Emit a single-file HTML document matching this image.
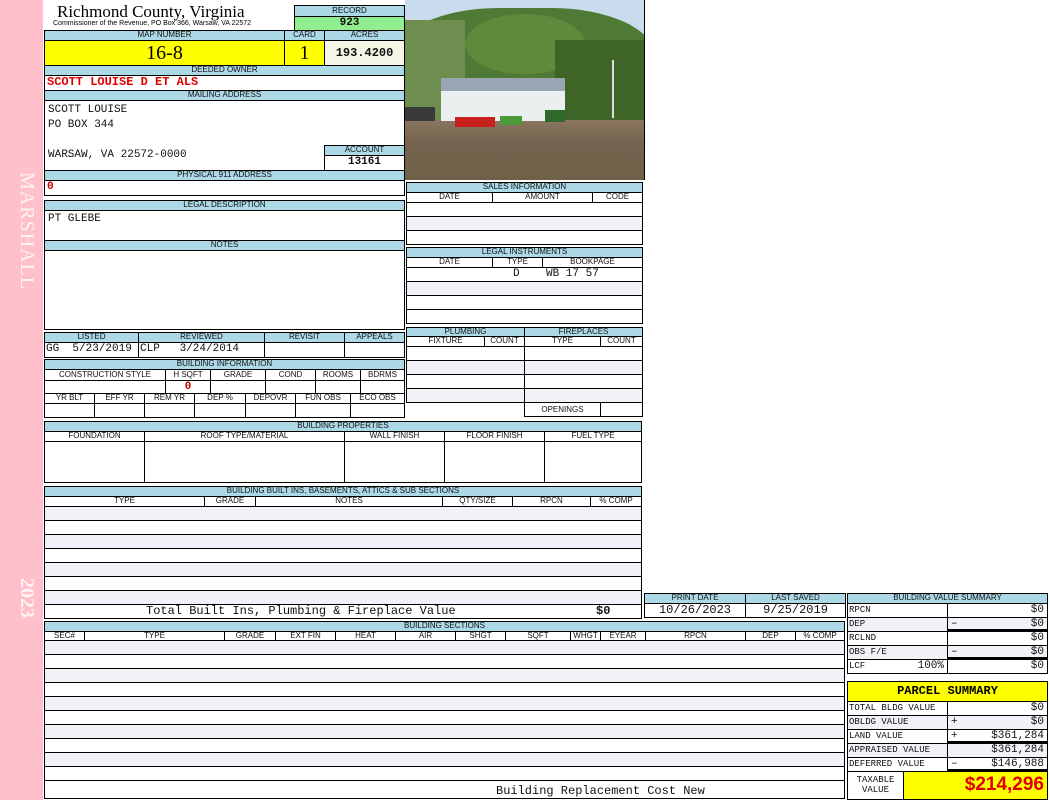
<!DOCTYPE html>
<html><head><meta charset="utf-8"><style>
body{margin:0;width:1050px;height:800px;background:#fff;position:relative;overflow:hidden;font-family:"Liberation Sans",sans-serif}
.c{position:absolute;box-sizing:border-box;border:1px solid #000;overflow:hidden;white-space:nowrap}
.h{background:#add8e6;font-size:8px;text-align:center;line-height:8px;color:#111}
.s{font-size:8px;text-align:center;line-height:8px;color:#111}
.m{font-family:"Liberation Mono",monospace;font-size:11px;line-height:13px;color:#111}
.a{background:#f1f2f8}
.r{text-align:right;padding-right:3px}
</style></head><body>
<div style="position:absolute;left:0;top:0;width:43px;height:800px;background:#ffc0cb"></div>
<div style="position:absolute;left:8px;top:172px;width:30px;height:150px;writing-mode:vertical-rl;font:20px 'Liberation Serif',serif;color:#fff3f5;letter-spacing:1px">MARSHALL</div>
<div style="position:absolute;left:8px;top:578px;width:30px;height:60px;writing-mode:vertical-rl;font:bold 20px 'Liberation Serif',serif;color:#fff3f5">2023</div>

<div style="position:absolute;left:57px;top:2px;font:17px 'Liberation Serif',serif;color:#000">Richmond County, Virginia</div>
<div style="position:absolute;left:53px;top:20px;font:7px 'Liberation Sans',sans-serif;color:#000">Commissioner of the Revenue, PO Box 366, Warsaw, VA 22572</div>
<div class="c h" style="left:294px;top:5px;width:111px;height:12px;line-height:10px">RECORD</div>
<div class="c m" style="left:294px;top:16px;width:111px;height:15px;background:#90ee90;text-align:center;font-weight:bold">923</div>

<div class="c h" style="left:44px;top:30px;width:241px;height:11px">MAP NUMBER</div>
<div class="c h" style="left:284px;top:30px;width:41px;height:11px">CARD</div>
<div class="c h" style="left:324px;top:30px;width:81px;height:11px">ACRES</div>
<div class="c" style="left:44px;top:40px;width:241px;height:26px;background:#ffff00;text-align:center;font:20px 'Liberation Serif',serif;line-height:24px">16-8</div>
<div class="c" style="left:284px;top:40px;width:41px;height:26px;background:#ffff00;text-align:center;font:20px 'Liberation Serif',serif;line-height:24px">1</div>
<div class="c m" style="left:324px;top:40px;width:81px;height:26px;background:#f5f5e6;text-align:center;font-weight:bold;line-height:24px;font-size:12px">193.4200</div>

<div class="c h" style="left:44px;top:65px;width:361px;height:11px">DEEDED OWNER</div>
<div class="c m" style="left:44px;top:75px;width:361px;height:16px;color:#e00000;font-weight:bold;padding-left:2px;font-size:12px">SCOTT LOUISE D ET ALS</div>
<div class="c h" style="left:44px;top:90px;width:361px;height:11px">MAILING ADDRESS</div>
<div class="c m" style="left:44px;top:100px;width:361px;height:71px;padding:2px 3px;line-height:15px;white-space:pre">SCOTT LOUISE
PO BOX 344

WARSAW, VA 22572-0000</div>
<div class="c h" style="left:324px;top:145px;width:81px;height:11px">ACCOUNT</div>
<div class="c m" style="left:324px;top:155px;width:81px;height:16px;text-align:center;font-weight:bold">13161</div>
<div class="c h" style="left:44px;top:170px;width:361px;height:11px">PHYSICAL 911 ADDRESS</div>
<div class="c m" style="left:44px;top:180px;width:361px;height:16px;color:#c00000;font-weight:bold;padding-left:2px">0</div>

<div class="c h" style="left:44px;top:200px;width:361px;height:11px">LEGAL DESCRIPTION</div>
<div class="c m" style="left:44px;top:210px;width:361px;height:31px;padding:2px 3px">PT GLEBE</div>
<div class="c h" style="left:44px;top:240px;width:361px;height:11px">NOTES</div>
<div class="c" style="left:44px;top:250px;width:361px;height:80px"></div>

<div class="c h" style="left:44px;top:332px;width:95px;height:11px">LISTED</div>
<div class="c h" style="left:138px;top:332px;width:127px;height:11px">REVIEWED</div>
<div class="c h" style="left:264px;top:332px;width:81px;height:11px">REVISIT</div>
<div class="c h" style="left:344px;top:332px;width:61px;height:11px">APPEALS</div>
<div class="c m" style="left:44px;top:342px;width:95px;height:16px;padding-left:1px;white-space:pre">GG  5/23/2019</div>
<div class="c m" style="left:138px;top:342px;width:127px;height:16px;padding-left:1px;white-space:pre">CLP   3/24/2014</div>
<div class="c" style="left:264px;top:342px;width:81px;height:16px"></div>
<div class="c" style="left:344px;top:342px;width:61px;height:16px"></div>

<div class="c h" style="left:44px;top:359px;width:361px;height:11px">BUILDING INFORMATION</div>
<div class="c s" style="left:44px;top:369px;width:122px;height:12px;line-height:10px">CONSTRUCTION STYLE</div>
<div class="c s" style="left:165px;top:369px;width:46px;height:12px;line-height:10px">H SQFT</div>
<div class="c s" style="left:210px;top:369px;width:56px;height:12px;line-height:10px">GRADE</div>
<div class="c s" style="left:265px;top:369px;width:51px;height:12px;line-height:10px">COND</div>
<div class="c s" style="left:315px;top:369px;width:46px;height:12px;line-height:10px">ROOMS</div>
<div class="c s" style="left:360px;top:369px;width:45px;height:12px;line-height:10px">BDRMS</div>
<div class="c" style="left:44px;top:380px;width:122px;height:14px"></div>
<div class="c m" style="left:165px;top:380px;width:46px;height:14px;text-align:center;color:#c00000;font-weight:bold;line-height:12px">0</div>
<div class="c" style="left:210px;top:380px;width:56px;height:14px"></div>
<div class="c" style="left:265px;top:380px;width:51px;height:14px"></div>
<div class="c" style="left:315px;top:380px;width:46px;height:14px"></div>
<div class="c" style="left:360px;top:380px;width:45px;height:14px"></div>
<div class="c s" style="left:44px;top:393px;width:51px;height:11px">YR BLT</div>
<div class="c s" style="left:94px;top:393px;width:51px;height:11px">EFF YR</div>
<div class="c s" style="left:144px;top:393px;width:51px;height:11px">REM YR</div>
<div class="c s" style="left:194px;top:393px;width:52px;height:11px">DEP %</div>
<div class="c s" style="left:245px;top:393px;width:51px;height:11px">DEPOVR</div>
<div class="c s" style="left:295px;top:393px;width:56px;height:11px">FUN OBS</div>
<div class="c s" style="left:350px;top:393px;width:55px;height:11px">ECO OBS</div>
<div class="c" style="left:44px;top:403px;width:51px;height:15px"></div>
<div class="c" style="left:94px;top:403px;width:51px;height:15px"></div>
<div class="c" style="left:144px;top:403px;width:51px;height:15px"></div>
<div class="c" style="left:194px;top:403px;width:52px;height:15px"></div>
<div class="c" style="left:245px;top:403px;width:51px;height:15px"></div>
<div class="c" style="left:295px;top:403px;width:56px;height:15px"></div>
<div class="c" style="left:350px;top:403px;width:55px;height:15px"></div>

<!-- photo -->
<div style="position:absolute;left:405px;top:0;width:240px;height:180px;overflow:hidden;background:#c9dcee;border-right:1px solid #000;box-sizing:border-box">
 <div style="position:absolute;left:-10px;top:8px;width:260px;height:120px;background:#4f7a35;border-radius:40% 40% 0 0"></div>
 <div style="position:absolute;left:0;top:20px;width:60px;height:100px;background:#6e8e50"></div>
 <div style="position:absolute;left:60px;top:14px;width:120px;height:60px;background:#5f8a3c;border-radius:50%"></div>
 <div style="position:absolute;left:150px;top:40px;width:90px;height:80px;background:#3f6428"></div>
 <div style="position:absolute;left:0;top:120px;width:240px;height:60px;background:linear-gradient(#8a7660,#75634f 40%,#6f6048)"></div>
 <div style="position:absolute;left:36px;top:78px;width:124px;height:13px;background:#9aa6b4"></div>
 <div style="position:absolute;left:36px;top:91px;width:124px;height:30px;background:#eceff0"></div>
 <div style="position:absolute;left:0;top:107px;width:30px;height:14px;background:#3a3a3a"></div>
 <div style="position:absolute;left:50px;top:117px;width:40px;height:10px;background:#c8201c"></div>
 <div style="position:absolute;left:95px;top:116px;width:22px;height:9px;background:#4a9a3a"></div>
 <div style="position:absolute;left:140px;top:110px;width:20px;height:12px;background:#2f6a2a"></div>
 <div style="position:absolute;left:207px;top:60px;width:2px;height:58px;background:#ddd"></div>
</div>

<div class="c h" style="left:406px;top:182px;width:237px;height:11px">SALES INFORMATION</div>
<div class="c s" style="left:406px;top:192px;width:87px;height:11px">DATE</div>
<div class="c s" style="left:492px;top:192px;width:101px;height:11px">AMOUNT</div>
<div class="c s" style="left:592px;top:192px;width:51px;height:11px">CODE</div>
<div class="c" style="left:406px;top:202px;width:237px;height:15px"></div>
<div class="c a" style="left:406px;top:216px;width:237px;height:15px"></div>
<div class="c" style="left:406px;top:230px;width:237px;height:15px"></div>

<div class="c h" style="left:406px;top:247px;width:237px;height:11px">LEGAL INSTRUMENTS</div>
<div class="c s" style="left:406px;top:257px;width:87px;height:11px">DATE</div>
<div class="c s" style="left:492px;top:257px;width:51px;height:11px">TYPE</div>
<div class="c s" style="left:542px;top:257px;width:101px;height:11px">BOOKPAGE</div>
<div class="c m" style="left:406px;top:267px;width:237px;height:15px;padding-left:106px;white-space:pre">D    WB 17 57</div>
<div class="c a" style="left:406px;top:281px;width:237px;height:15px"></div>
<div class="c" style="left:406px;top:295px;width:237px;height:15px"></div>
<div class="c" style="left:406px;top:309px;width:237px;height:15px"></div>

<div class="c h" style="left:406px;top:327px;width:119px;height:10px">PLUMBING</div>
<div class="c h" style="left:524px;top:327px;width:119px;height:10px">FIREPLACES</div>
<div class="c s" style="left:406px;top:336px;width:79px;height:11px">FIXTURE</div>
<div class="c s" style="left:484px;top:336px;width:41px;height:11px">COUNT</div>
<div class="c s" style="left:524px;top:336px;width:77px;height:11px">TYPE</div>
<div class="c s" style="left:600px;top:336px;width:43px;height:11px">COUNT</div>
<div class="c" style="left:406px;top:346px;width:119px;height:15px"></div>
<div class="c a" style="left:406px;top:360px;width:119px;height:15px"></div>
<div class="c" style="left:406px;top:374px;width:119px;height:15px"></div>
<div class="c a" style="left:406px;top:388px;width:119px;height:15px"></div>
<div class="c" style="left:524px;top:346px;width:119px;height:15px"></div>
<div class="c a" style="left:524px;top:360px;width:119px;height:15px"></div>
<div class="c" style="left:524px;top:374px;width:119px;height:15px"></div>
<div class="c a" style="left:524px;top:388px;width:119px;height:15px"></div>
<div class="c s" style="left:524px;top:402px;width:77px;height:15px;line-height:13px">OPENINGS</div>
<div class="c" style="left:600px;top:402px;width:43px;height:15px"></div>

<div class="c h" style="left:44px;top:421px;width:598px;height:11px">BUILDING PROPERTIES</div>
<div class="c s" style="left:44px;top:431px;width:101px;height:11px">FOUNDATION</div>
<div class="c s" style="left:144px;top:431px;width:201px;height:11px">ROOF TYPE/MATERIAL</div>
<div class="c s" style="left:344px;top:431px;width:101px;height:11px">WALL FINISH</div>
<div class="c s" style="left:444px;top:431px;width:101px;height:11px">FLOOR FINISH</div>
<div class="c s" style="left:544px;top:431px;width:98px;height:11px">FUEL TYPE</div>
<div class="c" style="left:44px;top:441px;width:101px;height:42px"></div>
<div class="c" style="left:144px;top:441px;width:201px;height:42px"></div>
<div class="c" style="left:344px;top:441px;width:101px;height:42px"></div>
<div class="c" style="left:444px;top:441px;width:101px;height:42px"></div>
<div class="c" style="left:544px;top:441px;width:98px;height:42px"></div>

<div class="c h" style="left:44px;top:486px;width:598px;height:11px">BUILDING BUILT INS, BASEMENTS, ATTICS &amp; SUB SECTIONS</div>
<div class="c s" style="left:44px;top:496px;width:161px;height:11px">TYPE</div>
<div class="c s" style="left:204px;top:496px;width:52px;height:11px">GRADE</div>
<div class="c s" style="left:255px;top:496px;width:188px;height:11px">NOTES</div>
<div class="c s" style="left:442px;top:496px;width:71px;height:11px">QTY/SIZE</div>
<div class="c s" style="left:512px;top:496px;width:79px;height:11px">RPCN</div>
<div class="c s" style="left:590px;top:496px;width:52px;height:11px">% COMP</div>
<div class="c a" style="left:44px;top:506px;width:598px;height:15px"></div>
<div class="c" style="left:44px;top:520px;width:598px;height:15px"></div>
<div class="c a" style="left:44px;top:534px;width:598px;height:15px"></div>
<div class="c" style="left:44px;top:548px;width:598px;height:15px"></div>
<div class="c a" style="left:44px;top:562px;width:598px;height:15px"></div>
<div class="c" style="left:44px;top:576px;width:598px;height:15px"></div>
<div class="c a" style="left:44px;top:590px;width:598px;height:15px"></div>
<div class="c m" style="left:44px;top:604px;width:598px;height:15px;padding-left:101px;line-height:12px;font-size:12px">Total Built Ins, Plumbing &amp; Fireplace Value<span style="position:absolute;left:551px;font-weight:bold">$0</span></div>

<div class="c h" style="left:644px;top:593px;width:102px;height:11px">PRINT DATE</div>
<div class="c h" style="left:745px;top:593px;width:101px;height:11px">LAST SAVED</div>
<div class="c m" style="left:644px;top:603px;width:102px;height:15px;text-align:center;font-size:12px;line-height:12px">10/26/2023</div>
<div class="c m" style="left:745px;top:603px;width:101px;height:15px;text-align:center;font-size:12px;line-height:12px">9/25/2019</div>

<div class="c h" style="left:44px;top:621px;width:801px;height:11px">BUILDING SECTIONS</div>
<div class="c s" style="left:44px;top:631px;width:41px;height:10px">SEC#</div>
<div class="c s" style="left:84px;top:631px;width:141px;height:10px">TYPE</div>
<div class="c s" style="left:224px;top:631px;width:52px;height:10px">GRADE</div>
<div class="c s" style="left:275px;top:631px;width:61px;height:10px">EXT FIN</div>
<div class="c s" style="left:335px;top:631px;width:61px;height:10px">HEAT</div>
<div class="c s" style="left:395px;top:631px;width:61px;height:10px">AIR</div>
<div class="c s" style="left:455px;top:631px;width:51px;height:10px">SHGT</div>
<div class="c s" style="left:505px;top:631px;width:66px;height:10px">SQFT</div>
<div class="c s" style="left:570px;top:631px;width:31px;height:10px">WHGT</div>
<div class="c s" style="left:600px;top:631px;width:46px;height:10px">EYEAR</div>
<div class="c s" style="left:645px;top:631px;width:101px;height:10px">RPCN</div>
<div class="c s" style="left:745px;top:631px;width:51px;height:10px">DEP</div>
<div class="c s" style="left:795px;top:631px;width:50px;height:10px">% COMP</div>
<div class="c a" style="left:44px;top:640px;width:801px;height:15px"></div>
<div class="c" style="left:44px;top:654px;width:801px;height:15px"></div>
<div class="c a" style="left:44px;top:668px;width:801px;height:15px"></div>
<div class="c" style="left:44px;top:682px;width:801px;height:15px"></div>
<div class="c a" style="left:44px;top:696px;width:801px;height:15px"></div>
<div class="c" style="left:44px;top:710px;width:801px;height:15px"></div>
<div class="c a" style="left:44px;top:724px;width:801px;height:15px"></div>
<div class="c" style="left:44px;top:738px;width:801px;height:15px"></div>
<div class="c a" style="left:44px;top:752px;width:801px;height:15px"></div>
<div class="c" style="left:44px;top:766px;width:801px;height:15px"></div>
<div class="c m" style="left:44px;top:780px;width:801px;height:19px;padding-left:451px;padding-top:4px;font-size:12px">Building Replacement Cost New</div>

<div class="c h" style="left:847px;top:593px;width:201px;height:11px">BUILDING VALUE SUMMARY</div>
<div class="c m" style="left:847px;top:603px;width:101px;height:15px;font-size:9px;padding-left:1px">RPCN</div>
<div class="c m r" style="left:947px;top:603px;width:101px;height:15px">$0</div>
<div class="c m a" style="left:847px;top:617px;width:101px;height:15px;font-size:9px;padding-left:1px">DEP</div>
<div class="c m r a" style="left:947px;top:617px;width:101px;height:15px;border-bottom:3px solid #000">$0<span style="position:absolute;left:3px">–</span></div>
<div class="c m" style="left:847px;top:631px;width:101px;height:15px;font-size:9px;padding-left:1px">RCLND</div>
<div class="c m r" style="left:947px;top:631px;width:101px;height:15px">$0</div>
<div class="c m a" style="left:847px;top:645px;width:101px;height:15px;font-size:9px;padding-left:1px">OBS F/E</div>
<div class="c m r a" style="left:947px;top:645px;width:101px;height:15px;border-bottom:3px solid #000">$0<span style="position:absolute;left:3px">–</span></div>
<div class="c m" style="left:847px;top:659px;width:101px;height:15px;font-size:9px;padding-left:1px">LCF<span style="position:absolute;right:3px;font-size:11px">100%</span></div>
<div class="c m r" style="left:947px;top:659px;width:101px;height:15px">$0</div>

<div class="c" style="left:847px;top:681px;width:201px;height:21px;background:#ffff00;text-align:center;font:bold 12px 'Liberation Mono',monospace;line-height:19px">PARCEL SUMMARY</div>
<div class="c m" style="left:847px;top:701px;width:101px;height:15px;font-size:9px;padding-left:1px">TOTAL BLDG VALUE</div>
<div class="c m r" style="left:947px;top:701px;width:101px;height:15px">$0</div>
<div class="c m a" style="left:847px;top:715px;width:101px;height:15px;font-size:9px;padding-left:1px">OBLDG VALUE</div>
<div class="c m r a" style="left:947px;top:715px;width:101px;height:15px">$0<span style="position:absolute;left:3px">+</span></div>
<div class="c m" style="left:847px;top:729px;width:101px;height:15px;font-size:9px;padding-left:1px">LAND VALUE</div>
<div class="c m r" style="left:947px;top:729px;width:101px;height:15px;border-bottom:3px solid #000">$361,284<span style="position:absolute;left:3px">+</span></div>
<div class="c m a" style="left:847px;top:743px;width:101px;height:15px;font-size:9px;padding-left:1px">APPRAISED VALUE</div>
<div class="c m r a" style="left:947px;top:743px;width:101px;height:15px">$361,284</div>
<div class="c m" style="left:847px;top:757px;width:101px;height:15px;font-size:9px;padding-left:1px">DEFERRED VALUE</div>
<div class="c m r" style="left:947px;top:757px;width:101px;height:15px;border-bottom:3px solid #000">$146,988<span style="position:absolute;left:3px">–</span></div>
<div class="c m" style="left:847px;top:771px;width:57px;height:29px;font-size:9px;line-height:10px;text-align:center;padding-top:3px;white-space:pre">TAXABLE
VALUE</div>
<div class="c" style="left:903px;top:771px;width:145px;height:29px;background:#ffff00;text-align:right;padding-right:3px;font:bold 19px 'Liberation Sans',sans-serif;color:#e00000;line-height:26px">$214,296</div>
</body></html>
